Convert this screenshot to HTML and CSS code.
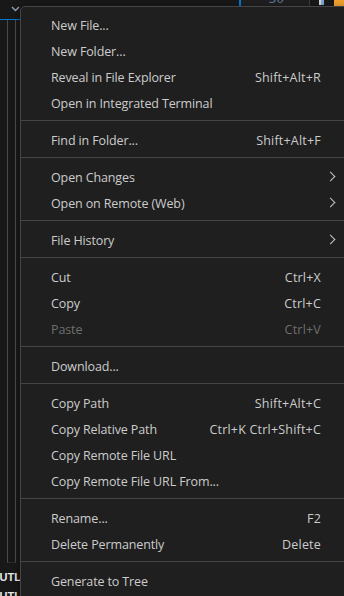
FILE: index.html
```html
<!DOCTYPE html>
<html lang="en">
<head>
    <meta charset="UTF-8">
    <meta name="viewport" content="width=device-width, initial-scale=1.0">
    <title>Explorer Context Menu</title>
    <link rel="stylesheet" href="styles.css">
</head>
<body>
    <div class="workbench">
        <div class="backdrop">
            <div class="top-strip">
                <div class="top-left"></div>
                <div class="tab-active"><span class="tab-num">30</span></div>
                <div class="tab-rest">
                    <span class="tab-icon"></span>
                    <span class="tab-orange"></span>
                </div>
            </div>
            <div class="rail">
                <div class="rail-head">
                    <svg class="rail-chevron" width="9" height="6" viewBox="0 0 9 6">
                        <polyline points="1,1 4.5,4.5 8,1" fill="none" stroke="#8fa3b8" stroke-width="1.4"/>
                    </svg>
                </div>
                <div class="rail-focus"></div>
                <div class="rail-tree"></div>
                <div class="rail-outline">OUTLINE</div>
                <div class="rail-next">OUTLINE</div>
            </div>
        </div>

        <div class="context-menu">
            <div class="menu-item"><span class="label">New File...</span></div>
            <div class="menu-item"><span class="label">New Folder...</span></div>
            <div class="menu-item"><span class="label">Reveal in File Explorer</span><span class="keys">Shift+Alt+R</span></div>
            <div class="menu-item"><span class="label">Open in Integrated Terminal</span></div>
            <div class="separator"></div>
            <div class="menu-item"><span class="label">Find in Folder...</span><span class="keys">Shift+Alt+F</span></div>
            <div class="separator"></div>
            <div class="menu-item submenu"><span class="label">Open Changes</span></div>
            <div class="menu-item submenu"><span class="label">Open on Remote (Web)</span></div>
            <div class="separator"></div>
            <div class="menu-item submenu"><span class="label">File History</span></div>
            <div class="separator"></div>
            <div class="menu-item"><span class="label">Cut</span><span class="keys">Ctrl+X</span></div>
            <div class="menu-item"><span class="label">Copy</span><span class="keys">Ctrl+C</span></div>
            <div class="menu-item disabled"><span class="label">Paste</span><span class="keys">Ctrl+V</span></div>
            <div class="separator"></div>
            <div class="menu-item"><span class="label">Download...</span></div>
            <div class="separator"></div>
            <div class="menu-item"><span class="label">Copy Path</span><span class="keys">Shift+Alt+C</span></div>
            <div class="menu-item"><span class="label">Copy Relative Path</span><span class="keys">Ctrl+K Ctrl+Shift+C</span></div>
            <div class="menu-item"><span class="label">Copy Remote File URL</span></div>
            <div class="menu-item"><span class="label">Copy Remote File URL From...</span></div>
            <div class="separator"></div>
            <div class="menu-item"><span class="label">Rename...</span><span class="keys">F2</span></div>
            <div class="menu-item"><span class="label">Delete Permanently</span><span class="keys">Delete</span></div>
            <div class="separator"></div>
            <div class="menu-item"><span class="label">Generate to Tree</span></div>
            <div class="menu-item"><span class="label">Open Timeline</span></div>
        </div>
    </div>
</body>
</html>
```

FILE: styles.css
```css
:root {
    --bg-color: #181818;
    --menu-bg: #1f1f1f;
    --menu-border: #454545;
    --text-color: #cccccc;
    --muted-color: #6e6e6e;
    --guide-color: #4a4a4a;
    --focus-color: #0078d4;
}

* {
    margin: 0;
    padding: 0;
    box-sizing: border-box;
}

body {
    background-color: var(--bg-color);
    font-family: 'Open Sans', 'Noto Sans', sans-serif;
    color: var(--text-color);
}

.workbench {
    position: relative;
    width: 344px;
    height: 596px;
    overflow: hidden;
}

/* editor + explorer bits behind the menu */
.backdrop {
    display: flex;
    flex-direction: column;
    height: 100%;
}

.top-strip {
    display: flex;
    height: 6px;
    overflow: hidden;
    flex-shrink: 0;
}

.top-left {
    width: 241px;
}

.tab-active {
    width: 71px;
    background: #1f1f1f;
    border-left: 2px solid #0078d4;
    border-right: 1px solid #3c3c3c;
}

.tab-num {
    display: block;
    margin: -8px 0 0 27px;
    font-family: 'DejaVu Sans Mono', monospace;
    font-size: 13px;
    line-height: 13px;
    color: #5d7591;
}

.tab-rest {
    flex: 1;
    display: flex;
    gap: 10px;
    padding-left: 9px;
}

.tab-icon {
    width: 5px;
    height: 5px;
    border-left: 2px solid #d8d8d8;
    background: #7fa8d6;
}

.tab-orange {
    width: 10px;
    background: #f0a030;
}

.rail {
    width: 20px;
    flex: 1;
    display: flex;
    flex-direction: column;
}

.rail-head {
    height: 13px;
    display: flex;
    justify-content: flex-end;
    align-items: flex-start;
}

.rail-chevron {
    display: block;
}

.rail-focus {
    height: 1px;
    background: var(--focus-color);
}

.rail-tree {
    flex: 1;
    margin-left: 7px;
    width: 9px;
    border-left: 1px solid var(--guide-color);
    border-right: 1px solid var(--guide-color);
    border-bottom: 1px solid #2b2b2b;
}

.rail-outline,
.rail-next {
    margin-left: -9px;
    font-family: 'Liberation Sans', sans-serif;
    font-weight: 700;
    font-size: 11px;
    line-height: 14px;
    color: #e8e8e8;
    white-space: nowrap;
    overflow: hidden;
    width: 29px;
}

.rail-outline {
    margin-top: 7px;
    height: 14px;
}

.rail-next {
    margin-top: 5px;
    height: 7px;
}

/* context menu */
.context-menu {
    position: absolute;
    top: 6px;
    left: 20px;
    width: 340px;
    padding: 5px 0;
    background: var(--menu-bg);
    border: 1px solid var(--menu-border);
    border-radius: 5px;
    box-shadow: 0 2px 8px rgba(0, 0, 0, 0.36);
}

.menu-item {
    display: flex;
    align-items: center;
    height: 26px;
    padding: 0 22px 0 30px;
    font-size: 12.5px;
    letter-spacing: -0.12px;
    white-space: nowrap;
    position: relative;
}

.menu-item .label {
    flex: 1;
}

.menu-item .keys {
    width: 300px;
    text-align: right;
    margin-left: -300px;
    margin-right: 16px;
    letter-spacing: 0.2px;
}

.menu-item.disabled {
    color: var(--muted-color);
}

.menu-item.submenu::after {
    content: '';
    position: absolute;
    left: 306px;
    top: 9px;
    width: 6px;
    height: 6px;
    border-top: 1.5px solid #c5c5c5;
    border-right: 1.5px solid #c5c5c5;
    transform: rotate(45deg);
}

.separator {
    height: 1px;
    margin: 4px 0 6px;
    background: var(--menu-border);
}
```
